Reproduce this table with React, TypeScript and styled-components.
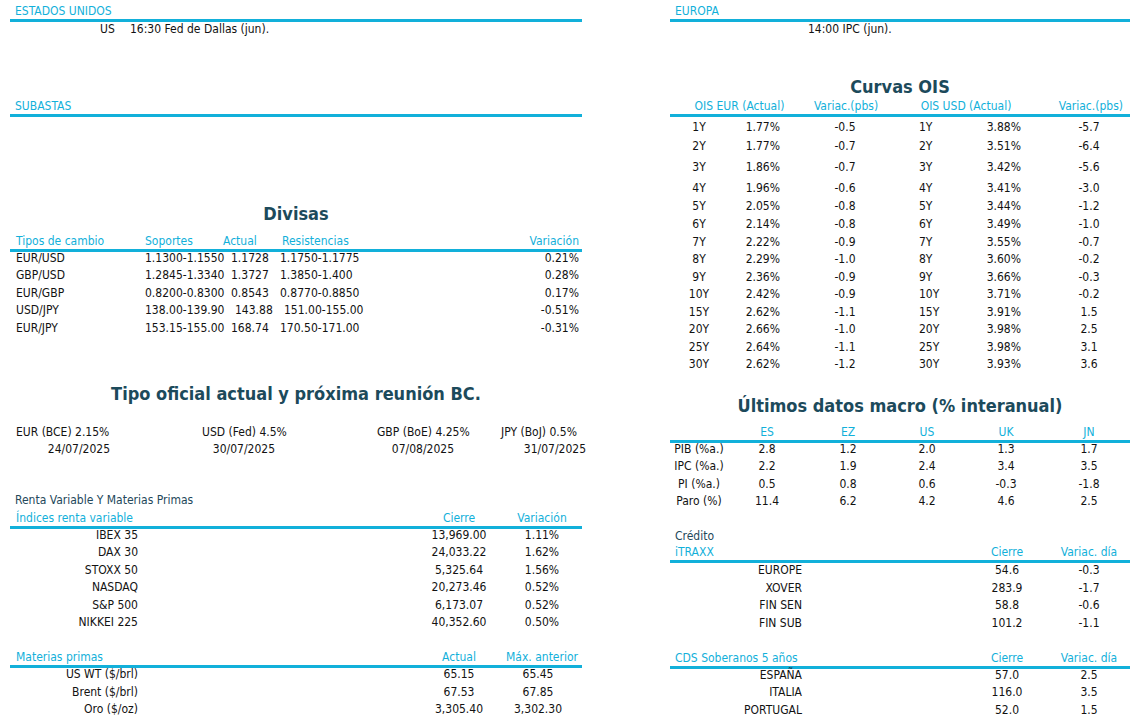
import React from "react";
import styled, { createGlobalStyle } from "styled-components";

const CYAN = "#12b0da";
const TITLE = "#1c4a5b";
const SUB = "#24485a";
const INK = "#121212";

const Global = createGlobalStyle`
  html, body { margin: 0; padding: 0; background: #ffffff; }
  body {
    font-family: "DejaVu Sans Condensed", "DejaVu Sans", "Liberation Sans", sans-serif;
    font-size: 12px;
    color: ${INK};
  }
`;

const Page = styled.div`
  display: flex;
  gap: 88px;
  padding-left: 10px;
  width: 1134px;
  height: 725px;
  box-sizing: border-box;
  overflow: hidden;
`;

const Column = styled.div<{ $w: number }>`
  flex: none;
  width: ${(p) => p.$w}px;
  display: flex;
  flex-direction: column;
`;

const Head = styled.div<{ $cols: string; $mt: number }>`
  display: grid;
  grid-template-columns: ${(p) => p.$cols};
  margin-top: ${(p) => p.$mt}px;
  line-height: 14px;
  padding-bottom: 1px;
  border-bottom: 3px solid ${CYAN};
  color: ${CYAN};
  white-space: nowrap;
`;

const Cell = styled.span<{ $a?: "left" | "center" | "right"; $pl?: number; $pr?: number }>`
  text-align: ${(p) => p.$a ?? "left"};
  padding-left: ${(p) => p.$pl ?? 0}px;
  padding-right: ${(p) => p.$pr ?? 0}px;
  white-space: nowrap;
`;

const Body = styled.div<{ $pt?: number }>`
  display: flex;
  flex-direction: column;
  padding-top: ${(p) => p.$pt ?? 0}px;
`;

const Row = styled.div<{ $cols: string; $h?: number; $mt?: number }>`
  display: grid;
  grid-template-columns: ${(p) => p.$cols};
  height: ${(p) => p.$h ?? 17.4}px;
  margin-top: ${(p) => p.$mt ?? 0}px;
  line-height: 12px;
  white-space: nowrap;
`;

const EventRow = styled.div<{ $cols: string }>`
  display: grid;
  grid-template-columns: ${(p) => p.$cols};
  line-height: 14px;
  color: ${INK};
`;

const Title = styled.div<{ $mt: number }>`
  margin-top: ${(p) => p.$mt}px;
  text-align: center;
  font-size: 18px;
  font-weight: bold;
  line-height: 24px;
  color: ${TITLE};
  white-space: nowrap;
`;

const Label = styled.div<{ $mt: number }>`
  margin-top: ${(p) => p.$mt}px;
  padding-left: 5px;
  line-height: 14px;
  color: ${SUB};
`;

/* ---------- data ---------- */

const fx = [
  ["EUR/USD", "1.1300-1.1550", "1.1728", "1.1750-1.1775", "0.21%", 0],
  ["GBP/USD", "1.2845-1.3340", "1.3727", "1.3850-1.400", "0.28%", 0],
  ["EUR/GBP", "0.8200-0.8300", "0.8543", "0.8770-0.8850", "0.17%", 0],
  ["USD/JPY", "138.00-139.90", "143.88", "151.00-155.00", "-0.51%", 4],
  ["EUR/JPY", "153.15-155.00", "168.74", "170.50-171.00", "-0.31%", 0],
] as const;

const rates = ["EUR (BCE) 2.15%", "USD (Fed) 4.5%", "GBP (BoE) 4.25%", "JPY (BoJ) 0.5%"];
const dates = ["24/07/2025", "30/07/2025", "07/08/2025", "31/07/2025"];

const equities = [
  ["IBEX 35", "13,969.00", "1.11%"],
  ["DAX 30", "24,033.22", "1.62%"],
  ["STOXX 50", "5,325.64", "1.56%"],
  ["NASDAQ", "20,273.46", "0.52%"],
  ["S&P 500", "6,173.07", "0.52%"],
  ["NIKKEI 225", "40,352.60", "0.50%"],
];

const commodities = [
  ["US WT ($/brl)", "65.15", "65.45"],
  ["Brent ($/brl)", "67.53", "67.85"],
  ["Oro ($/oz)", "3,305.40", "3,302.30"],
];

const ois = [
  ["1Y", "1.77%", "-0.5", "3.88%", "-5.7", 19],
  ["2Y", "1.77%", "-0.7", "3.51%", "-6.4", 21],
  ["3Y", "1.86%", "-0.7", "3.42%", "-5.6", 21],
  ["4Y", "1.96%", "-0.6", "3.41%", "-3.0", 18],
  ["5Y", "2.05%", "-0.8", "3.44%", "-1.2", 18],
  ["6Y", "2.14%", "-0.8", "3.49%", "-1.0", 17.5],
  ["7Y", "2.22%", "-0.9", "3.55%", "-0.7", 17.5],
  ["8Y", "2.29%", "-1.0", "3.60%", "-0.2", 17.5],
  ["9Y", "2.36%", "-0.9", "3.66%", "-0.3", 17.5],
  ["10Y", "2.42%", "-0.9", "3.71%", "-0.2", 17.5],
  ["15Y", "2.62%", "-1.1", "3.91%", "1.5", 17.5],
  ["20Y", "2.66%", "-1.0", "3.98%", "2.5", 17.5],
  ["25Y", "2.64%", "-1.1", "3.98%", "3.1", 17.5],
  ["30Y", "2.62%", "-1.2", "3.93%", "3.6", 17.5],
] as const;

const macroCols = ["ES", "EZ", "US", "UK", "JN"];
const macro = [
  ["PIB (%a.)", "2.8", "1.2", "2.0", "1.3", "1.7"],
  ["IPC (%a.)", "2.2", "1.9", "2.4", "3.4", "3.5"],
  ["PI (%a.)", "0.5", "0.8", "0.6", "-0.3", "-1.8"],
  ["Paro (%)", "11.4", "6.2", "4.2", "4.6", "2.5"],
];

const itraxx = [
  ["EUROPE", "54.6", "-0.3"],
  ["XOVER", "283.9", "-1.7"],
  ["FIN SEN", "58.8", "-0.6"],
  ["FIN SUB", "101.2", "-1.1"],
];

const cds = [
  ["ESPAÑA", "57.0", "2.5"],
  ["ITALIA", "116.0", "3.5"],
  ["PORTUGAL", "52.0", "1.5"],
];

/* ---------- column templates ---------- */
const FX_HEAD = "135px 78px 59px 1fr auto";
const FX_ROW = "135px 86px 49px 1fr auto";
const BC_RATES = "192px 175px 124px 1fr";
const BC_DATES = "100px 165px 179px 132px";
const EQ_HEAD = "415px 68px 1fr";
const EQ_ROW = "128px 287px 68px 1fr";
const OIS_HEAD = "139px 74px 166px 1fr";
const OIS_ROW = "58px 52px 130px 60px 85px 68px";
const MACRO = "58px 78px 84px 74px 84px 82px";
const CREDIT = "132px 170px 70px 88px";

export default function App() {
  return (
    <>
      <Global />
      <Page>
        <Column $w={572}>
          <Head $cols="1fr" $mt={4}>
            <Cell $pl={5}>ESTADOS UNIDOS</Cell>
          </Head>
          <EventRow $cols="90px 30px 1fr">
            <span />
            <span>US</span>
            <span>16:30 Fed de Dallas (jun).</span>
          </EventRow>
          <Head $cols="1fr" $mt={63}>
            <Cell $pl={5}>SUBASTAS</Cell>
          </Head>

          <Title $mt={85}>Divisas</Title>
          <Head $cols={FX_HEAD} $mt={8}>
            <Cell $pl={6}>Tipos de cambio</Cell>
            <Cell>Soportes</Cell>
            <Cell>Actual</Cell>
            <Cell>Resistencias</Cell>
            <Cell $a="right" $pr={3}>Variación</Cell>
          </Head>
          <Body>
            {fx.map(([n, s, a, r, v, sh]) => (
              <Row key={n} $cols={FX_ROW}>
                <Cell $pl={6}>{n}</Cell>
                <Cell>{s}</Cell>
                <Cell $pl={sh}>{a}</Cell>
                <Cell $pl={sh}>{r}</Cell>
                <Cell $a="right" $pr={3}>{v}</Cell>
              </Row>
            ))}
          </Body>

          <Title $mt={43}>Tipo oficial actual y próxima reunión BC.</Title>
          <Row $cols={BC_RATES} $h={17} $mt={20}>
            {rates.map((r, i) => (
              <Cell key={r} $pl={i === 0 ? 6 : 0}>{r}</Cell>
            ))}
          </Row>
          <Row $cols={BC_DATES} $h={17}>
            {dates.map((d) => (
              <Cell key={d} $a="right">{d}</Cell>
            ))}
          </Row>

          <Label $mt={33}>Renta Variable Y Materias Primas</Label>
          <Head $cols={EQ_HEAD} $mt={4}>
            <Cell $pl={6}>Índices renta variable</Cell>
            <Cell $a="center">Cierre</Cell>
            <Cell $a="center" $pl={9}>Variación</Cell>
          </Head>
          <Body>
            {equities.map(([n, c, v]) => (
              <Row key={n} $cols={EQ_ROW}>
                <Cell $a="right">{n}</Cell>
                <span />
                <Cell $a="center">{c}</Cell>
                <Cell $a="center" $pl={9}>{v}</Cell>
              </Row>
            ))}
          </Body>

          <Head $cols={EQ_HEAD} $mt={17}>
            <Cell $pl={6}>Materias primas</Cell>
            <Cell $a="center">Actual</Cell>
            <Cell $a="center" $pl={9}>Máx. anterior</Cell>
          </Head>
          <Body>
            {commodities.map(([n, a, m]) => (
              <Row key={n} $cols={EQ_ROW}>
                <Cell $a="right">{n}</Cell>
                <span />
                <Cell $a="center">{a}</Cell>
                <Cell $a="center" $pl={1}>{m}</Cell>
              </Row>
            ))}
          </Body>
        </Column>

        <Column $w={460}>
          <Head $cols="1fr" $mt={4}>
            <Cell $pl={5}>EUROPA</Cell>
          </Head>
          <EventRow $cols="138px 1fr">
            <span />
            <span>14:00 IPC (jun).</span>
          </EventRow>

          <Title $mt={39}>Curvas OIS</Title>
          <Head $cols={OIS_HEAD} $mt={0}>
            <Cell $a="center">OIS EUR (Actual)</Cell>
            <Cell $a="center">Variac.(pbs)</Cell>
            <Cell $a="center">OIS USD (Actual)</Cell>
            <Cell $a="right" $pr={7}>Variac.(pbs)</Cell>
          </Head>
          <Body $pt={4}>
            {ois.map(([t, e, ve, u, vu, h]) => (
              <Row key={t} $cols={OIS_ROW} $h={h}>
                <Cell $a="center">{t}</Cell>
                <Cell $a="right">{e}</Cell>
                <Cell $a="center">{ve}</Cell>
                <Cell $pl={9}>{t}</Cell>
                <Cell $a="right" $pr={34}>{u}</Cell>
                <Cell $a="center">{vu}</Cell>
              </Row>
            ))}
          </Body>

          <Title $mt={18.5}>Últimos datos macro (% interanual)</Title>
          <Head $cols={MACRO} $mt={7}>
            <span />
            {macroCols.map((c) => (
              <Cell key={c} $a="center">{c}</Cell>
            ))}
          </Head>
          <Body>
            {macro.map((r) => (
              <Row key={r[0]} $cols={MACRO}>
                {r.map((v, i) => (
                  <Cell key={i} $a="center">{v}</Cell>
                ))}
              </Row>
            ))}
          </Body>

          <Label $mt={16.4}>Crédito</Label>
          <Head $cols={CREDIT} $mt={2}>
            <Cell $pl={5}>iTRAXX</Cell>
            <span />
            <Cell $a="center">Cierre</Cell>
            <Cell $a="center" $pl={6}>Variac. día</Cell>
          </Head>
          <Body $pt={1.5}>
            {itraxx.map(([n, c, v]) => (
              <Row key={n} $cols={CREDIT}>
                <Cell $a="right">{n}</Cell>
                <span />
                <Cell $a="center">{c}</Cell>
                <Cell $a="center" $pl={6}>{v}</Cell>
              </Row>
            ))}
          </Body>

          <Head $cols={CREDIT} $mt={16.9}>
            <Cell $pl={5} style={{ gridColumn: "1 / 3" }}>CDS Soberanos 5 años</Cell>
            <Cell $a="center">Cierre</Cell>
            <Cell $a="center" $pl={6}>Variac. día</Cell>
          </Head>
          <Body>
            {cds.map(([n, c, v]) => (
              <Row key={n} $cols={CREDIT}>
                <Cell $a="right">{n}</Cell>
                <span />
                <Cell $a="center">{c}</Cell>
                <Cell $a="center" $pl={6}>{v}</Cell>
              </Row>
            ))}
          </Body>
        </Column>
      </Page>
    </>
  );
}
